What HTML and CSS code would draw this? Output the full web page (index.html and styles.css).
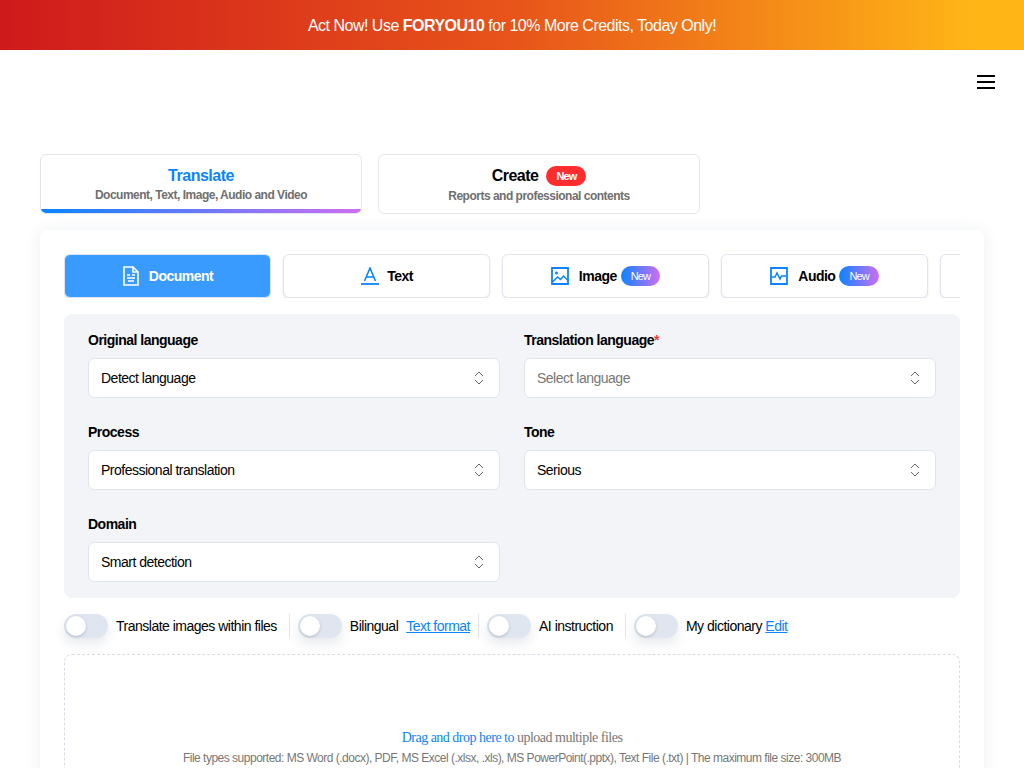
FILE: index.html
```html
<!DOCTYPE html>
<html lang="en">

<head>
    <meta charset="UTF-8">
    <title>Translate</title>
    <link rel="stylesheet" href="styles.css">
</head>

<body>
    <div class="promo">Act Now! Use <b>FORYOU10</b> for 10% More Credits, Today Only!</div>

    <header class="topbar">
        <button class="menu-btn" aria-label="Menu"><span></span><span></span><span></span></button>
    </header>

    <main class="page">
        <div class="modes">
            <div class="mode mode-active">
                <div class="mode-title">Translate</div>
                <div class="mode-sub">Document, Text, Image, Audio and Video</div>
            </div>
            <div class="mode">
                <div class="mode-title">Create <span class="badge badge-red">New</span></div>
                <div class="mode-sub">Reports and professional contents</div>
            </div>
        </div>

        <section class="card">
            <div class="tabs">
                <div class="tab tab-active">
                    <svg class="tab-icon" viewBox="0 0 18 20" fill="none" stroke="currentColor" stroke-width="1.6">
                        <path d="M2 1h9l5 5v13H2z" />
                        <path d="M11 1v5h5" />
                        <path d="M5 9h3M10 9h3M5 12h8M6 15h6" />
                    </svg>
                    <span>Document</span>
                </div>
                <div class="tab tab-text">
                    <svg class="tab-icon" viewBox="0 0 18 18" fill="none" stroke="#0a84ff" stroke-width="1.6">
                        <path d="M3.5 14L9 1l5.500 13M5 10h8" />
                        <path d="M0 17h18" stroke-width="1.800" />
                    </svg>
                    <span>Text</span>
                </div>
                <div class="tab tab-new">
                    <svg class="tab-icon" viewBox="0 0 18 18" fill="none" stroke="#0a84ff" stroke-width="1.8">
                        <path d="M1 1h16v16H1z" />
                        <circle cx="5.500" cy="6" r="1.500" fill="#0a84ff" stroke="none" />
                        <path d="M1.500 15l5-5 3 2.500 3-3.500 4.500 4.500" stroke-width="1.500" />
                    </svg>
                    <span>Image</span>
                    <span class="badge badge-grad">New</span>
                </div>
                <div class="tab tab-new">
                    <svg class="tab-icon" viewBox="0 0 18 18" fill="none" stroke="#0a84ff" stroke-width="1.8">
                        <path d="M1 1h16v16H1z" />
                        <path d="M1.500 10h3.500l2-4 3 6 1.500-3h5" stroke-width="1.500" />
                    </svg>
                    <span>Audio</span>
                    <span class="badge badge-grad">New</span>
                </div>
                <div class="tab"></div>
            </div>

            <div class="form-panel">
                <div class="field">
                    <label>Original language</label>
                    <div class="select">Detect language
                        <svg class="chevrons" viewBox="0 0 10 14" fill="none" stroke="#666" stroke-width="1">
                            <path d="M1 5l4-4 4 4M1 9l4 4 4-4" />
                        </svg>
                    </div>
                </div>
                <div class="field">
                    <label>Translation language<em>*</em></label>
                    <div class="select select-empty">Select language
                        <svg class="chevrons" viewBox="0 0 10 14" fill="none" stroke="#666" stroke-width="1">
                            <path d="M1 5l4-4 4 4M1 9l4 4 4-4" />
                        </svg>
                    </div>
                </div>
                <div class="field">
                    <label>Process</label>
                    <div class="select">Professional translation
                        <svg class="chevrons" viewBox="0 0 10 14" fill="none" stroke="#666" stroke-width="1">
                            <path d="M1 5l4-4 4 4M1 9l4 4 4-4" />
                        </svg>
                    </div>
                </div>
                <div class="field">
                    <label>Tone</label>
                    <div class="select">Serious
                        <svg class="chevrons" viewBox="0 0 10 14" fill="none" stroke="#666" stroke-width="1">
                            <path d="M1 5l4-4 4 4M1 9l4 4 4-4" />
                        </svg>
                    </div>
                </div>
                <div class="field">
                    <label>Domain</label>
                    <div class="select">Smart detection
                        <svg class="chevrons" viewBox="0 0 10 14" fill="none" stroke="#666" stroke-width="1">
                            <path d="M1 5l4-4 4 4M1 9l4 4 4-4" />
                        </svg>
                    </div>
                </div>
            </div>

            <div class="options">
                <div class="option"><span class="toggle"></span><span>Translate images within files</span></div>
                <div class="option option-tight"><span class="toggle"></span><span>Bilingual</span><a href="#">Text format</a></div>
                <div class="option"><span class="toggle"></span><span>AI instruction</span></div>
                <div class="option"><span class="toggle"></span><span>My dictionary <a href="#">Edit</a></span></div>
            </div>

            <div class="dropzone">
                <p class="drop-title"><span>Drag and drop here to</span> upload multiple files</p>
                <p class="drop-note">File types supported: MS Word (.docx), PDF, MS Excel (.xlsx, .xls), MS PowerPoint(.pptx), Text File (.txt) | The maximum file size: 300MB</p>
            </div>
        </section>
    </main>
</body>

</html>
```

FILE: styles.css
```css
* {
    box-sizing: border-box;
}

html,
body {
    height: 100%;
    overflow: hidden;
}

body {
    margin: 0;
    background: #fff;
    color: #000;
    font-family: "Liberation Sans", Arial, sans-serif;
    font-size: 14px;
    letter-spacing: -0.5px;
}

.promo {
    height: 50px;
    line-height: 52px;
    text-align: center;
    color: #fff;
    font-size: 16px;
    background: linear-gradient(90deg, #cf1a1c 0%, #e8541a 50%, #ffb516 95%);
}

.topbar {
    height: 104px;
    display: flex;
    justify-content: flex-end;
    padding: 25px 29px 0 0;
}

.menu-btn {
    width: 18px;
    height: 14px;
    padding: 0;
    border: none;
    background: none;
    display: flex;
    flex-direction: column;
    justify-content: space-between;
}

.menu-btn span {
    display: block;
    height: 2px;
    background: #000;
}

.page {
    padding: 0 40px;
}

.modes {
    display: flex;
    gap: 16px;
    margin-bottom: 16px;
}

.mode {
    width: 322px;
    height: 60px;
    border: 1px solid #e2e6ee;
    border-radius: 6px;
    text-align: center;
    padding-top: 10px;
    position: relative;
    overflow: hidden;
}

.mode-active::after {
    content: "";
    position: absolute;
    left: 0;
    right: 0;
    bottom: 0;
    height: 4px;
    background: linear-gradient(90deg, #0a84ff, #cf6ef0);
}

.mode-title {
    height: 20px;
    line-height: 20px;
    font-size: 16px;
    font-weight: bold;
    display: flex;
    justify-content: center;
    align-items: center;
    gap: 8px;
    margin-top: 1px;
}

.mode-active .mode-title {
    color: #0a84ff;
}

.mode-sub {
    margin-top: 3px;
    font-size: 12px;
    font-weight: bold;
    color: #6f6f6f;
}

.mode-active .mode-sub {
    margin-top: 2px;
}

.badge {
    display: inline-block;
    height: 20px;
    line-height: 20px;
    padding: 0 10px;
    border-radius: 10px;
    color: #fff;
    font-size: 11px;
    letter-spacing: -0.9px;
}

.badge-red {
    background: #ff2e2e;
}

.badge-grad {
    background: linear-gradient(90deg, #0a84ff, #cf6ef0);
    font-weight: normal;
}

.card {
    background: #fff;
    border-radius: 8px;
    padding: 24px;
    height: 800px;
    box-shadow: 0 0 16px rgba(30, 50, 90, 0.08);
}

.tabs {
    display: flex;
    gap: 12px;
    overflow: hidden;
    margin-bottom: 16px;
}

.tab {
    flex: 0 0 207px;
    height: 44px;
    border: 1px solid #dfe4ed;
    border-radius: 6px;
    display: flex;
    justify-content: center;
    align-items: center;
    gap: 4px;
    font-weight: bold;
    background: #fff;
    box-shadow: 0 1px 2px rgba(30, 50, 90, 0.12);
}

.tab-active {
    background: #3a9bff;
    border-color: #dfe4ed;
    color: #fff;
}

.tab-text {
    padding-left: 1px;
}

.tab-icon {
    width: 18px;
    height: 18px;
    margin-right: 5px;
}

.tab-text .tab-icon {
    margin-right: 4px;
}

.tab-new .tab-icon {
    margin-right: 6px;
}

.tab-active .tab-icon {
    height: 20px;
}

.form-panel {
    background: #f2f4f8;
    border-radius: 8px;
    padding: 16px 24px;
    display: grid;
    grid-template-columns: 1fr 1fr;
    column-gap: 24px;
    row-gap: 24px;
}

.field label {
    display: block;
    height: 20px;
    line-height: 20px;
    margin-bottom: 8px;
    font-weight: bold;
}

.field em {
    color: #ef3b3b;
    font-style: normal;
}

.select {
    height: 40px;
    background: #fff;
    border: 1px solid #dfe4ed;
    border-radius: 6px;
    padding: 0 15px 0 12px;
    display: flex;
    justify-content: space-between;
    align-items: center;
}

.select-empty {
    color: #777;
}

.chevrons {
    width: 10px;
    height: 14px;
}

.options {
    display: flex;
    align-items: center;
    margin: 16px 0;
    height: 24px;
}

.option {
    display: flex;
    align-items: center;
    height: 24px;
    gap: 8px;
    padding-right: 12px;
    margin-right: 8px;
    border-right: 1px solid #dfe4ed;
}

.option-tight {
    padding-right: 8px;
}

.option:last-child {
    border-right: none;
}

.toggle {
    width: 44px;
    height: 24px;
    border-radius: 12px;
    background: #e0e6ef;
    position: relative;
    box-shadow: 0 6px 12px rgba(30, 50, 90, 0.1);
}

.toggle::after {
    content: "";
    position: absolute;
    top: 2px;
    left: 2px;
    width: 20px;
    height: 20px;
    border-radius: 50%;
    background: #fff;
    box-shadow: 0 1px 3px rgba(30, 50, 90, 0.25);
}

.option a {
    color: #0a84ff;
}

.dropzone {
    height: 300px;
    border: 1px dashed #d6dde6;
    border-radius: 8px;
    padding-top: 75px;
    text-align: center;
}

.drop-title {
    margin: 0;
    font-family: "Liberation Serif", "Times New Roman", serif;
    font-size: 14px;
    color: #777;
}

.drop-title span {
    color: #0a84ff;
}

.drop-note {
    margin: 5px 0 0;
    font-size: 12px;
    color: #777;
}
```
